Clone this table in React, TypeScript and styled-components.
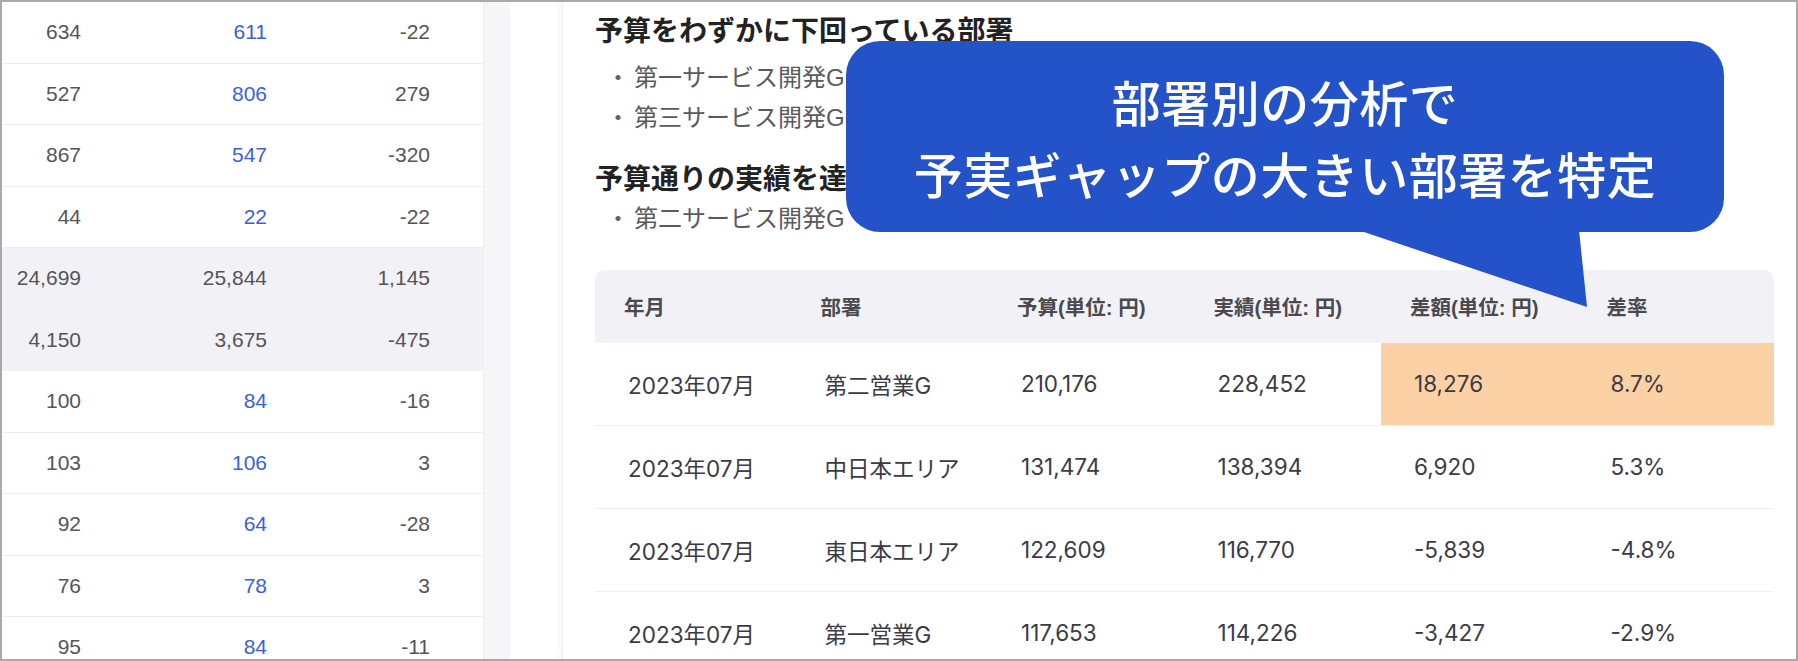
import styled, { createGlobalStyle } from "styled-components";

type NumRowData = {
  values: [string, string, string];
  total?: boolean;
};

type DeptRow = {
  month: string;
  dept: string;
  budget: string;
  actual: string;
  diff: string;
  rate: string;
  alert?: boolean;
};

const numRows: NumRowData[] = [
  { values: ["634", "611", "-22"] },
  { values: ["527", "806", "279"] },
  { values: ["867", "547", "-320"] },
  { values: ["44", "22", "-22"] },
  { values: ["24,699", "25,844", "1,145"], total: true },
  { values: ["4,150", "3,675", "-475"], total: true },
  { values: ["100", "84", "-16"] },
  { values: ["103", "106", "3"] },
  { values: ["92", "64", "-28"] },
  { values: ["76", "78", "3"] },
  { values: ["95", "84", "-11"] },
];

const deptRows: DeptRow[] = [
  { month: "2023年07月", dept: "第二営業G", budget: "210,176", actual: "228,452", diff: "18,276", rate: "8.7%", alert: true },
  { month: "2023年07月", dept: "中日本エリア", budget: "131,474", actual: "138,394", diff: "6,920", rate: "5.3%" },
  { month: "2023年07月", dept: "東日本エリア", budget: "122,609", actual: "116,770", diff: "-5,839", rate: "-4.8%" },
  { month: "2023年07月", dept: "第一営業G", budget: "117,653", actual: "114,226", diff: "-3,427", rate: "-2.9%" },
];

const headers = ["年月", "部署", "予算(単位: 円)", "実績(単位: 円)", "差額(単位: 円)", "差率"];

const App = () => {
  return (
    <>
      <GlobalStyle />
      <Frame>
        <LeftPane>
          <NumTable>
            {numRows.map((row, idx) => (
              <NumRow key={idx} $total={row.total}>
                <NumCell>{row.values[0]}</NumCell>
                <NumCell $link={!row.total}>{row.values[1]}</NumCell>
                <NumCell>{row.values[2]}</NumCell>
              </NumRow>
            ))}
          </NumTable>
          <ScrollTrack />
        </LeftPane>

        <MainArea>
          <Card>
            <Heading>予算をわずかに下回っている部署</Heading>
            <ItemList $top={8}>
              <Item><Dot>・</Dot>第一サービス開発G</Item>
              <Item><Dot>・</Dot>第三サービス開発G</Item>
            </ItemList>
            <Heading $gap>予算通りの実績を達成している部署</Heading>
            <ItemList $top={1}>
              <Item><Dot>・</Dot>第二サービス開発G</Item>
            </ItemList>

            <DeptTable>
              <HeadRow>
                {headers.map((h) => (
                  <HeadCell key={h}>{h}</HeadCell>
                ))}
              </HeadRow>
              {deptRows.map((r, idx) => (
                <BodyRow key={idx}>
                  <BodyCell>{r.month}</BodyCell>
                  <BodyCell>{r.dept}</BodyCell>
                  <BodyCell>{r.budget}</BodyCell>
                  <BodyCell>{r.actual}</BodyCell>
                  <BodyCell $alert={r.alert}>{r.diff}</BodyCell>
                  <BodyCell $alert={r.alert}>{r.rate}</BodyCell>
                </BodyRow>
              ))}
            </DeptTable>
          </Card>
        </MainArea>

        <Bubble>
          <BubbleText>部署別の分析で</BubbleText>
          <BubbleText>予実ギャップの大きい部署を特定</BubbleText>
          <Tail viewBox="0 0 878 80" width="878" height="80">
            <polygon points="512,0 733,0 741,77" fill="#2452c8" />
          </Tail>
        </Bubble>
      </Frame>
    </>
  );
};

export default App;

const GlobalStyle = createGlobalStyle`
  body {
    margin: 0;
    background: #fff;
    font-family: "Liberation Sans", "Noto Sans CJK JP", sans-serif;
  }
`

const Frame = styled.div`
  position: relative;
  display: flex;
  width: 1798px;
  height: 661px;
  box-sizing: border-box;
  border: 2px solid #a9a9ab;
  overflow: hidden;
  background: #fff;
`

const LeftPane = styled.div`
  display: flex;
  flex-shrink: 0;
  width: 508px;
`

const NumTable = styled.div`
  display: flex;
  flex-direction: column;
  width: 482px;
`

const NumRow = styled.div<{ $total?: boolean }>`
  display: grid;
  grid-template-columns: 99px 186px 163px;
  align-items: center;
  flex-shrink: 0;
  height: 61.5px;
  box-sizing: border-box;
  background: ${({ $total }) => ($total ? "#f2f2f6" : "#fff")};
  border-bottom: 1px solid ${({ $total }) => ($total ? "#f2f2f6" : "#eeeef2")};
`

const NumCell = styled.div<{ $link?: boolean }>`
  padding-right: 20px;
  text-align: right;
  font-size: 21px;
  color: ${({ $link }) => ($link ? "#3a62d6" : "#555558")};
`

const ScrollTrack = styled.div`
  width: 26px;
  background: #f6f6f8;
  border-left: 1px solid #efeff1;
`

const MainArea = styled.div`
  flex: 1;
  display: flex;
  padding-left: 52px;
`

const Card = styled.div`
  flex: 1;
  padding: 8px 23px 0 32px;
  border-left: 1px solid #f0f0f2;
  box-shadow: -4px 0 6px rgba(0, 0, 0, 0.035);
`

const Heading = styled.h2<{ $gap?: boolean }>`
  margin: ${({ $gap }) => ($gap ? "23px" : "0")} 0 0;
  font-family: "Noto Sans CJK JP", sans-serif;
  font-size: 28px;
  font-weight: 700;
  line-height: 38px;
  color: #222;
  white-space: nowrap;
`

const ItemList = styled.ul<{ $top: number }>`
  display: flex;
  flex-direction: column;
  margin: ${({ $top }) => $top}px 0 0;
  padding: 0 0 0 11px;
  list-style: none;
`

const Item = styled.li`
  display: flex;
  align-items: center;
  height: 39.5px;
  font-family: "Liberation Sans", "Noto Sans CJK JP", sans-serif;
  font-size: 24px;
  color: #5a5a5e;
`

const Dot = styled.span`
  display: inline-block;
  width: 24px;
  margin-right: 4px;
  text-align: center;
  font-family: "Noto Sans CJK JP", sans-serif;
  color: #666;
`

const DeptTable = styled.div`
  margin-top: 33px;
  width: 1179px;
`

const HeadRow = styled.div`
  display: grid;
  grid-template-columns: repeat(6, 1fr);
  align-items: center;
  height: 73px;
  background: #f2f2f6;
  border-radius: 10px 10px 0 0;
`

const HeadCell = styled.div`
  padding-left: 29px;
  font-family: "Liberation Sans", "Noto Sans CJK JP", sans-serif;
  font-size: 20.5px;
  font-weight: 700;
  color: #4a4a4e;
  white-space: nowrap;
`

const BodyRow = styled.div`
  display: grid;
  grid-template-columns: repeat(6, 1fr);
  height: 83px;
  box-sizing: border-box;
  border-bottom: 1px solid #efeff4;
`

const BodyCell = styled.div<{ $alert?: boolean }>`
  display: flex;
  align-items: center;
  padding-left: 33px;
  font-family: Inter, "Noto Sans CJK JP", sans-serif;
  font-size: 22.5px;
  color: #3b3b45;
  white-space: nowrap;
  background: ${({ $alert }) => ($alert ? "#fdd1a6" : "transparent")};
`

const Bubble = styled.div`
  position: absolute;
  left: 844px;
  top: 39px;
  width: 878px;
  height: 191px;
  display: flex;
  flex-direction: column;
  align-items: center;
  justify-content: center;
  border-radius: 34px;
  background: #2452c8;
`

const BubbleText = styled.div`
  font-family: "Noto Sans CJK JP", sans-serif;
  font-size: 49px;
  font-weight: 500;
  line-height: 72px;
  letter-spacing: 0.5px;
  color: #fff;
  white-space: nowrap;
`

const Tail = styled.svg`
  position: absolute;
  left: 0;
  top: 189px;
`
